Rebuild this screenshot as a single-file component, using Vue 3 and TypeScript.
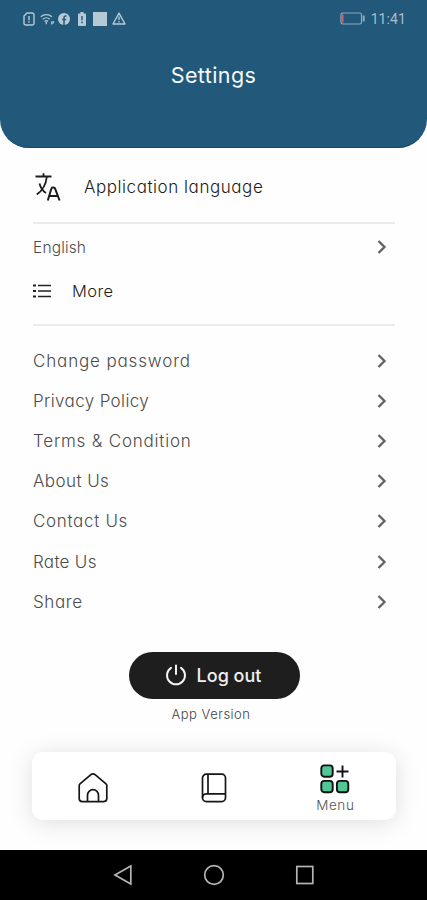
<script setup lang="ts">
interface Row {
  label: string
  spacing: number
}

const rows: Row[] = [
  { label: 'Change password', spacing: 0.85 },
  { label: 'Privacy Policy', spacing: 0.37 },
  { label: 'Terms & Condition', spacing: 0.79 },
  { label: 'About Us', spacing: 0.42 },
  { label: 'Contact Us', spacing: 0.68 },
  { label: 'Rate Us', spacing: 0.3 },
  { label: 'Share', spacing: 0.6 },
]
</script>

<template>
  <div class="screen">
    <header class="header">
      <div class="status">
        <div class="status-icons">
          <svg width="12" height="14" viewBox="0 0 12 14" fill="none" stroke="currentColor" stroke-width="1.4">
            <path d="M4 1h5.2a1.8 1.8 0 0 1 1.8 1.8v8.4A1.8 1.8 0 0 1 9.200 13H2.800A1.800 1.800 0 0 1 1 11.200V4z" />
            <path d="M6 4v4.200M6 9.300v1.400" />
          </svg>
          <svg width="15" height="14" viewBox="0 0 15 14" fill="none" stroke="currentColor" stroke-width="1.300">
            <path d="M.8 4.800c3-2.900 8-2.900 11 0M2.800 7.200c2-1.900 5-1.900 7 0M4.600 9.400c1-.9 2.400-.9 3.400 0" />
            <path d="M6.300 9.800v2.400M11.700 9.500v3M13.300 9v2.500" />
          </svg>
          <svg width="12" height="12" viewBox="0 0 12 12">
            <circle cx="6" cy="6" r="6" fill="currentColor" />
            <path d="M8.600 3H7.800C6.600 3 6 3.700 6 4.800V12M4.200 6.500h4" fill="none" stroke="#24587a" stroke-width="1.500" />
          </svg>
          <svg class="cell" width="8" height="14" viewBox="0 0 8 14">
            <path d="M2.400 0h3.200v1.400H7a1 1 0 0 1 1 1V13a1 1 0 0 1-1 1H1a1 1 0 0 1-1-1V2.400a1 1 0 0 1 1-1h1.400z" fill="currentColor" />
            <path d="M4 4v4.200M4 9.600v1.600" stroke="#24587a" stroke-width="1.400" />
          </svg>
          <span class="block"></span>
          <svg width="14" height="13" viewBox="0 0 14 13" fill="none" stroke="currentColor" stroke-width="1.400">
            <path d="M7 1.200 13 12H1z" stroke-linejoin="round" />
            <path d="M7 4.500v3.600M7 9v1.500" />
          </svg>
        </div>
        <div class="status-right">
          <svg width="26" height="13" viewBox="0 0 26 13" fill="none">
            <rect x="1" y="1" width="20.500" height="11" rx="1.800" stroke="#8eabbd" stroke-width="1.200" />
            <path d="M23.700 3.500v6" stroke="#8eabbd" stroke-width="2" />
            <path d="M2.500 2.500v8" stroke="#c95d6a" stroke-width="2.200" />
          </svg>
          <span class="clock">11:41</span>
        </div>
      </div>
      <h1 class="title">Settings</h1>
    </header>

    <main class="content">
      <div class="section language">
        <svg width="28" height="32" viewBox="0 0 28 32" fill="none" stroke="#1c1c1c">
          <path d="M.5 4.500h16M8.500 1.200V4.500" stroke-width="1.800" />
          <path d="M11.800 5C11 12 7.500 18.500 1.800 22.500M4.500 11.500c1 4 3 7.200 6.500 9.500" stroke-width="1.800" />
          <path d="M12.800 28.500 16.300 16.700q.3-1.200 1.500-1.200h.8q1.200 0 1.500 1.200L24.600 28.500M14.300 24h9" stroke-width="2" />
        </svg>
        <span class="language-label">Application language</span>
      </div>

      <button class="row english">
        <span class="english-label">English</span>
        <svg class="chevron" width="10" height="16" viewBox="0 0 10 16"><path d="m1.500 2 6 6-6 6" /></svg>
      </button>

      <div class="section more">
        <svg width="18" height="14" viewBox="0 0 18 14" fill="none" stroke="#222">
          <path d="M0 1.500h3M0 7h3M0 12.500h3" stroke-width="2" />
          <path d="M5 1.500h13M5 7h13M5 12.500h13" stroke-width="1.600" />
        </svg>
        <span class="more-label">More</span>
      </div>

      <nav class="list">
        <button v-for="row in rows" :key="row.label" class="row">
          <span :style="{ letterSpacing: row.spacing + 'px' }">{{ row.label }}</span>
          <svg class="chevron" width="10" height="16" viewBox="0 0 10 16"><path d="m1.500 2 6 6-6 6" /></svg>
        </button>
      </nav>

      <button class="logout">
        <svg width="22" height="22" viewBox="0 0 22 22" fill="none" stroke="#f2f2f2" stroke-width="2" stroke-linecap="round">
          <path d="M11 1.500v8.500M6 3.800a9 9 0 1 0 10 0" />
        </svg>
        <span>Log out</span>
      </button>
      <p class="version">App Version</p>
    </main>

    <nav class="tabs">
      <button class="tab">
        <svg width="30" height="30" viewBox="0 0 30 30" fill="none" stroke="#161616" stroke-width="1.700">
          <path d="M1.200 12.600q0-1 .8-1.700L12.600 1.900q2.400-1.900 4.800 0L28 10.900q.8.700.8 1.700v13q0 3-3 3H4.200q-3 0-3-3z" />
          <path d="M9.500 28.500v-6.300a5.500 5.500 0 0 1 11 0v6.300" />
        </svg>
      </button>
      <button class="tab">
        <svg width="26" height="30" viewBox="0 0 26 30" fill="none" stroke="#161616" stroke-width="1.700">
          <rect x="1.500" y="1.200" width="23" height="27.400" rx="3.800" />
          <path d="M7 1.200v19.600M24.500 20.800H5.500a4 4 0 0 0-4 4" />
        </svg>
      </button>
      <button class="tab active">
        <svg width="30" height="30" viewBox="0 0 30 30" fill="#50c795" stroke="#111" stroke-width="1.900">
          <rect x="1.300" y="1.400" width="11.400" height="11.400" rx="3" />
          <rect x="1.300" y="16.900" width="11.400" height="11.400" rx="3" />
          <rect x="16.900" y="16.900" width="11.400" height="11.400" rx="3" />
          <path d="M22.500 1.500v12M16.500 7.500h12" />
        </svg>
        <span>Menu</span>
      </button>
    </nav>

    <footer class="system">
      <svg width="20" height="22" viewBox="0 0 20 22"><path d="M17.800 2v18L2 11z" /></svg>
      <svg width="22" height="22" viewBox="0 0 22 22"><circle cx="11" cy="11" r="9.300" /></svg>
      <svg width="20" height="22" viewBox="0 0 20 22"><rect x="1.800" y="2.500" width="16" height="17" /></svg>
    </footer>
  </div>
</template>

<style>
body {
  margin: 0;
  background: #fefefe;
}
</style>

<style scoped>
.screen {
  display: flex;
  flex-direction: column;
  width: 427px;
  height: 900px;
  overflow: hidden;
  background: #fefefe;
  font-family: Inter, sans-serif;
  font-feature-settings: 'cv11' 1;
}
button {
  border: 0;
  padding: 0;
  margin: 0;
  background: none;
  font: inherit;
  font-feature-settings: inherit;
  color: inherit;
}
.header {
  box-sizing: border-box;
  flex: none;
  height: 148px;
  border-radius: 0 0 29px 29px;
  background: #225879;
  box-shadow: inset 0 -2px 1px -1px #104b72;
  color: #f5f9fc;
}
.status {
  display: flex;
  justify-content: space-between;
  align-items: center;
  height: 37px;
  padding: 0 21px 0 23px;
}
.status-icons {
  display: flex;
  align-items: center;
  color: #b6cad6;
}
.status-icons svg:nth-child(2) {
  margin: 0 3px 0 5px;
}
.status-icons .cell {
  margin: 0 7px 0 8px;
}
.block {
  width: 14px;
  height: 14px;
  margin-right: 5px;
  background: #b6cad6;
}
.status-right {
  display: flex;
  align-items: center;
  gap: 5px;
}
.clock {
  font: 400 14px Roboto, sans-serif;
  letter-spacing: 0.1px;
  color: #a8bfcd;
}
.title {
  margin: 25px 0 0;
  font-size: 21.5px;
  line-height: 26px;
  font-weight: 400;
  letter-spacing: 0.4px;
  text-align: center;
}
.content {
  display: flex;
  flex-direction: column;
  flex: none;
  height: 604px;
  padding: 0 32px 0 33px;
}
.section {
  display: flex;
  align-items: center;
  box-sizing: border-box;
  border-bottom: 2px solid #ebebeb;
  font-size: 17px;
  font-weight: 300;
  color: #1c1c1c;
}
.language {
  height: 76px;
  padding: 3px 0 0 2px;
}
.language svg {
  margin-top: 2px;
}
.language-label {
  margin: 0 0 0 21px;
  letter-spacing: 0.55px;
}
.row {
  display: flex;
  justify-content: space-between;
  align-items: center;
  flex: none;
  height: 40.2px;
  padding-right: 8px;
  font-size: 17px;
  font-weight: 300;
  color: #4c4c4c;
}
.english {
  height: 46px;
}
.english-label {
  font-size: 15.5px;
  letter-spacing: 0.15px;
}
.chevron {
  fill: none;
  stroke: #626262;
  stroke-width: 2.3;
}
.more {
  height: 56px;
  padding-bottom: 12px;
  gap: 21px;
}
.more-label {
  font-size: 16.5px;
  letter-spacing: 0.4px;
}
.list {
  display: flex;
  flex-direction: column;
  margin-top: 14.5px;
}
.logout {
  display: flex;
  justify-content: center;
  align-items: center;
  align-self: center;
  gap: 10px;
  box-sizing: border-box;
  width: 171px;
  height: 47px;
  margin-top: 30px;
  padding-right: 2px;
  border-radius: 24px;
  background: #1e1e1e;
  font-size: 18px;
  font-weight: 500;
  color: #f0f0f0;
}
.version {
  margin: 7px 6px 0 0;
  font-size: 13px;
  line-height: 16px;
  font-weight: 300;
  letter-spacing: 0.5px;
  text-align: center;
  color: #444;
}
.tabs {
  display: grid;
  grid-template-columns: repeat(3, 1fr);
  align-items: center;
  flex: none;
  height: 68px;
  margin: 0 31px 0 32px;
  border-radius: 11px;
  background: #fff;
  box-shadow: 0 3px 24px rgba(0, 0, 0, 0.13);
}
.tab {
  display: flex;
  flex-direction: column;
  align-items: center;
  padding-top: 3px;
}
.tab.active {
  gap: 2px;
  padding-top: 6px;
  font-size: 13.5px;
  line-height: 18px;
  font-weight: 300;
  letter-spacing: 0.6px;
  color: #555;
}
.system {
  display: flex;
  justify-content: center;
  align-items: center;
  gap: 70px;
  height: 50px;
  margin-top: auto;
  background: #000;
}
.system svg {
  fill: none;
  stroke: #b5b5b5;
  stroke-width: 1.7;
}
</style>
